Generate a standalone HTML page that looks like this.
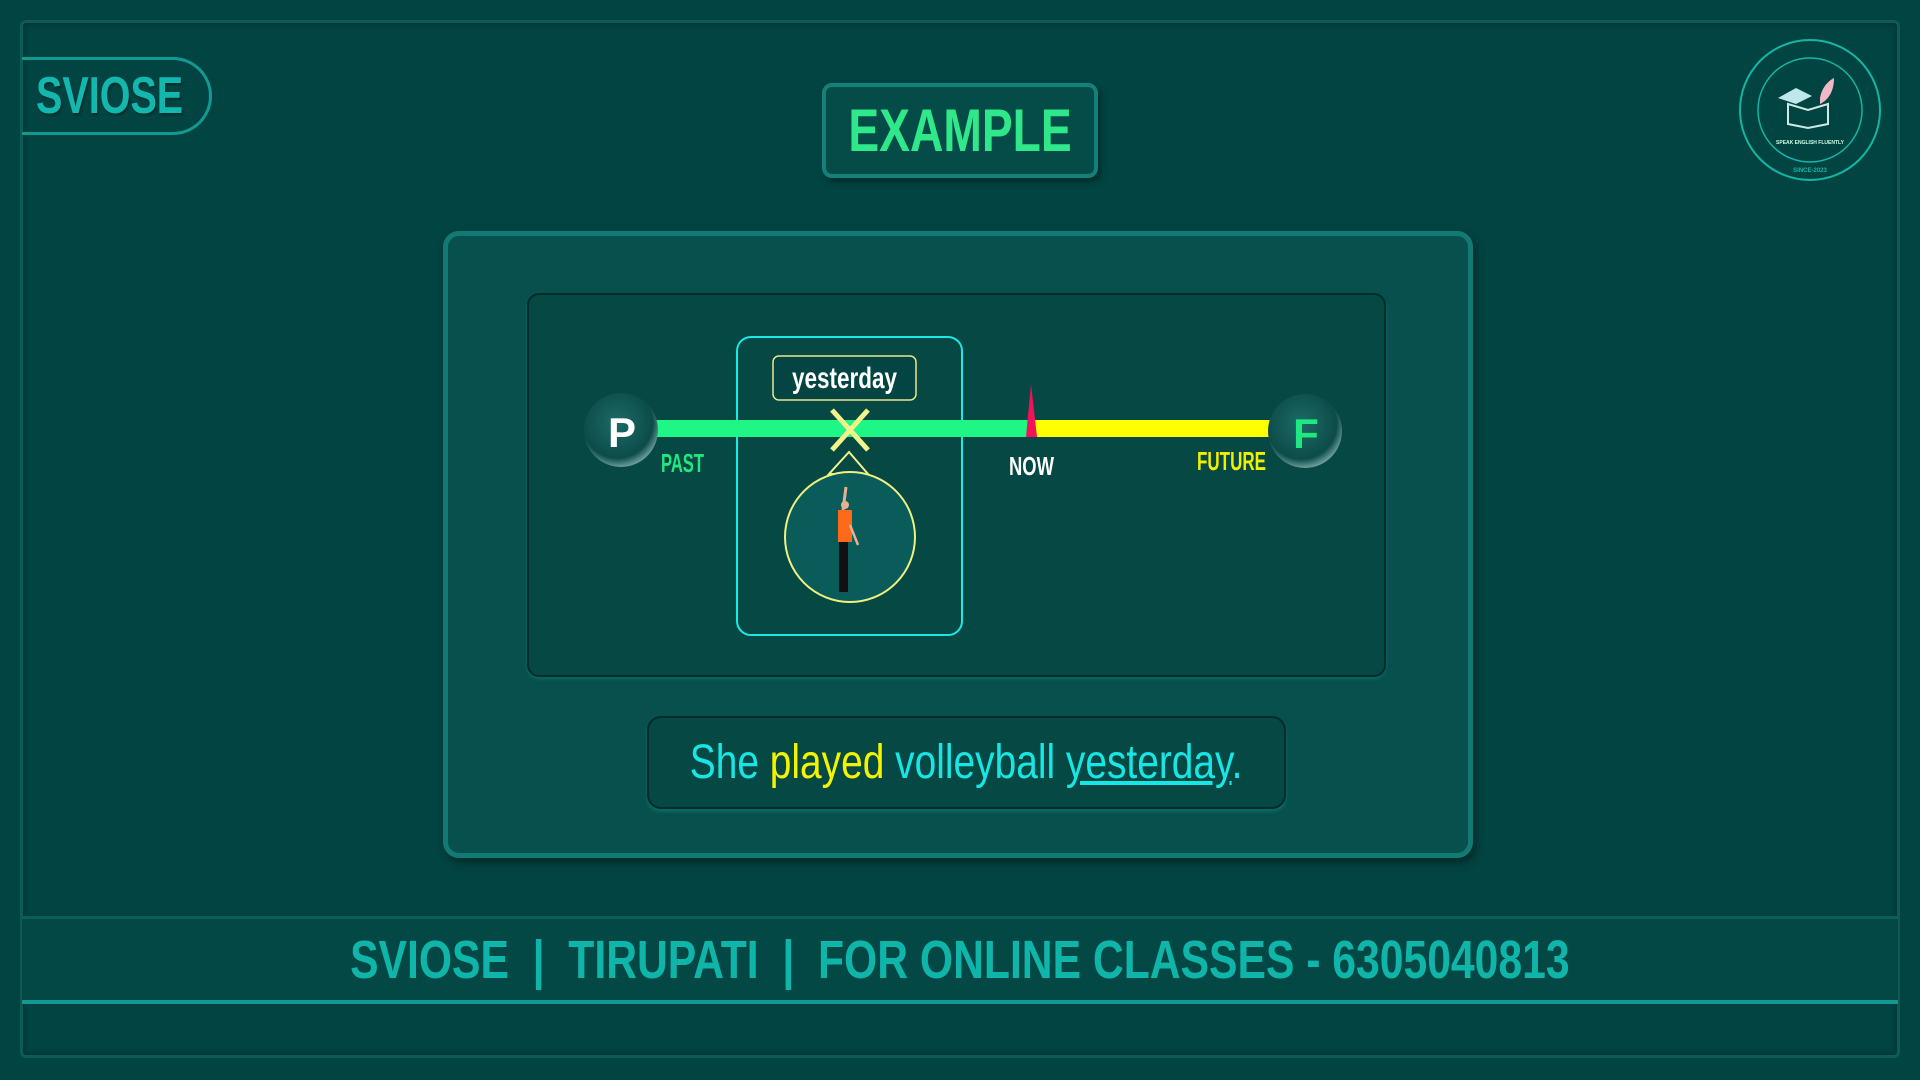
<!DOCTYPE html>
<html><head><meta charset="utf-8"><style>
*{margin:0;padding:0;box-sizing:border-box}
body{width:1920px;height:1080px;background:#024442;position:relative;overflow:hidden;font-family:"Liberation Sans",sans-serif;font-weight:bold}
.abs{position:absolute}
.sx{display:inline-block;white-space:nowrap;transform-origin:center;flex:none}
.fc{display:flex;justify-content:center;align-items:center}
.frame{left:20px;top:20px;width:1880px;height:1038px;border:3px solid #0d5a57;border-radius:6px;box-shadow:0 0 6px #012e2d inset}
.pill{left:22px;top:57px;width:190px;height:78px;border:3px solid #129a92;border-left:none;border-radius:0 40px 40px 0;color:#12b8ad;font-size:52px;line-height:72px;text-shadow:2px 2px 2px #012e2d}
.pill .sx{transform:scaleX(0.76);transform-origin:left;margin-left:14px}
.ex{left:822px;top:83px;width:276px;height:95px;border:4px solid #138079;border-radius:10px;background:#054b48;color:#2ee88a;font-size:60px;line-height:87px;box-shadow:3px 4px 6px #012c2b}
.panel{left:443px;top:231px;width:1030px;height:627px;border:5px solid #137a73;border-radius:16px;background:#08504d;box-shadow:3px 5px 8px #012c2b}
.inner{left:527px;top:293px;width:859px;height:384px;border:2px solid #022c2a;border-radius:12px;background:#054844;box-shadow:0 2px 3px #0a6b66}
.sent{left:647px;top:716px;width:639px;height:93px;border:2px solid #022c2a;border-radius:14px;background:#054844;box-shadow:0 3px 3px #0a6b66;font-weight:normal;font-size:48px;line-height:88px;color:#18e6e4}
.foot{left:22px;top:916px;width:1876px;height:88px;border-top:3px solid #0b5e5a;border-bottom:4px solid #129a92;background:#034845;color:#10b5aa;font-size:54px;line-height:84px}
</style></head><body>
<div class="abs frame"></div>
<div class="abs pill"><span class="sx">SVIOSE</span></div>
<div class="abs ex fc"><span class="sx" style="transform:scaleX(0.77)">EXAMPLE</span></div>
<div class="abs panel"></div>
<div class="abs inner"></div>
<svg class="abs" style="left:0;top:0" width="1920" height="1080">
<defs><radialGradient id="g" cx="45%" cy="40%" r="60%"><stop offset="0" stop-color="#1d6a66"/><stop offset="0.8" stop-color="#0c4c49"/><stop offset="1" stop-color="#6a9c99"/></radialGradient></defs>
<rect x="737" y="337" width="225" height="298" rx="14" fill="none" stroke="#1de8e8" stroke-width="2"/>
<rect x="773" y="356" width="143" height="44" rx="6" fill="#044442" stroke="#e8e890" stroke-width="1.5"/>
<text x="792" y="388" textLength="105" lengthAdjust="spacingAndGlyphs" font-family="Liberation Sans,sans-serif" font-size="30" fill="#fff">yesterday</text>
<rect x="655" y="420" width="376" height="17" fill="#1ef785"/>
<rect x="1031" y="420" width="240" height="17" fill="#ffff00"/>
<polygon points="1031,384 1026,437 1037,437" fill="#f5105a"/>
<path d="M832,410 L868,450 M868,410 L832,450" stroke="#f3f38a" stroke-width="5"/>
<polygon points="849,452 829,474 868,474" fill="none" stroke="#f3f38a" stroke-width="2"/>
<ellipse cx="850" cy="537" rx="65" ry="65" fill="#0a5c5a" stroke="#f0f080" stroke-width="2"/>
<path d="M846,487 L843,510" stroke="#e8b090" stroke-width="3"/>
<rect x="838" y="510" width="14" height="32" fill="#ff6a1a"/>
<path d="M850,525 L858,545" stroke="#e8b090" stroke-width="2.5"/>
<rect x="839" y="542" width="9" height="50" fill="#111"/>
<circle cx="845" cy="505" r="4" fill="#e8b090"/>
<circle cx="621" cy="430" r="37" fill="url(#g)"/>
<circle cx="1305" cy="431" r="37" fill="url(#g)"/>
<text x="622" y="447" text-anchor="middle" font-family="Liberation Sans,sans-serif" font-weight="bold" font-size="42" fill="#fff">P</text>
<text x="1306" y="448" text-anchor="middle" font-family="Liberation Sans,sans-serif" font-weight="bold" font-size="42" fill="#20e880">F</text>
<text x="661" y="472" textLength="43" lengthAdjust="spacingAndGlyphs" font-family="Liberation Sans,sans-serif" font-size="26" fill="#20e880">PAST</text>
<text x="1009" y="475" textLength="45" lengthAdjust="spacingAndGlyphs" font-family="Liberation Sans,sans-serif" font-size="26" fill="#fff">NOW</text>
<text x="1197" y="470" textLength="69" lengthAdjust="spacingAndGlyphs" font-family="Liberation Sans,sans-serif" font-size="26" fill="#f0f000">FUTURE</text>
<g fill="none" stroke="#14b5a5">
<circle cx="1810" cy="110" r="70" stroke-width="2"/>
<circle cx="1810" cy="110" r="52" stroke-width="1.5"/>
</g>
<path d="M1778,98 L1796,88 L1812,96 L1796,104 Z" fill="#bfe8ec"/>
<path d="M1788,104 L1788,124 L1808,128 L1828,124 L1828,104 L1808,110 Z" fill="none" stroke="#cfe8e8" stroke-width="2"/>
<path d="M1820,98 C1822,86 1830,80 1834,78 C1834,92 1828,100 1820,104 Z" fill="#f2b8c8"/>
<text x="1810" y="144" text-anchor="middle" font-family="Liberation Sans,sans-serif" font-size="5" fill="#cfe">SPEAK ENGLISH FLUENTLY</text>
<text x="1810" y="172" text-anchor="middle" font-family="Liberation Sans,sans-serif" font-size="6" fill="#14b5a5">SINCE-2023</text>
</svg>
<div class="abs sent fc"><span class="sx" style="transform:scaleX(0.81)">She <span style="color:#f4f400">played</span> volleyball <span style="text-decoration:underline">yesterday</span>.</span></div>
<div class="abs foot fc"><span class="sx" style="transform:scaleX(0.79)">SVIOSE &nbsp;|&nbsp; TIRUPATI &nbsp;|&nbsp; FOR ONLINE CLASSES - 6305040813</span></div>
</body></html>
